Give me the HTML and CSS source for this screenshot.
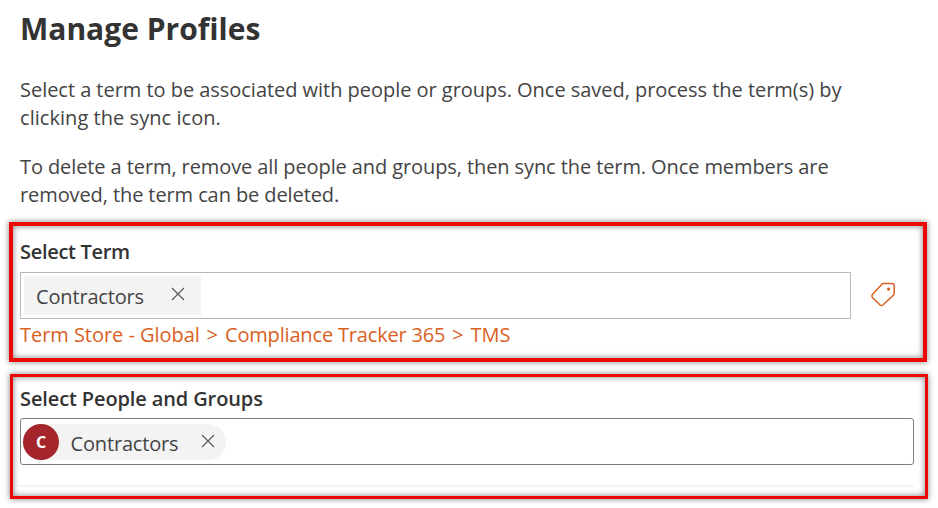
FILE: index.html
```html
<!DOCTYPE html>
<html lang="en">
<head>
    <meta charset="UTF-8">
    <meta name="viewport" content="width=device-width, initial-scale=1.0">
    <title>Manage Profiles</title>
    <link rel="stylesheet" href="styles.css">
</head>
<body>
    <h1>Manage Profiles</h1>
    <p class="intro">Select a term to be associated with people or groups. Once saved, process the term(s) by<br>
        <span class="intro-sync">clicking the sync icon.</span></p>
    <p class="intro intro-delete">To delete a term, remove all people and groups, then sync the term. Once members are<br>
        removed, the term can be deleted.</p>

    <section class="highlight term">
        <h2>Select Term</h2>
        <div class="term-row">
            <div class="field term-field">
                <div class="chip">
                    <span class="chip-text">Contractors</span>
                    <svg class="close" viewBox="0 0 14 14"><path d="M1 1 L13 13 M13 1 L1 13"/></svg>
                </div>
            </div>
            <svg class="tag" viewBox="0 0 26 27">
                <path d="M13.2 1.6 H22.2 Q24.2 1.6 24.2 3.6 V11.4 Q24.2 12.4 23.4 13.2 L12.9 23 Q11.5 24.2 10.1 23 L2.4 15.5 Q1.2 14 2.4 12.4 L11.7 2.4 Q12.4 1.6 13.2 1.6 Z"/>
                <circle cx="18.6" cy="7.1" r="1.6"/>
            </svg>
        </div>
        <div class="term-path">Term Store - Global <span class="sep">&gt;</span> <span class="term-set">Compliance Tracker 365</span> <span class="sep">&gt;</span> TMS</div>
    </section>

    <section class="highlight people">
        <h2>Select People and Groups</h2>
        <div class="field people-field">
            <div class="chip persona">
                <span class="avatar">C</span>
                <span class="chip-text">Contractors</span>
                <svg class="close" viewBox="0 0 14 14"><path d="M1 1 L13 13 M13 1 L1 13"/></svg>
            </div>
        </div>
        <hr>
    </section>
</body>
</html>
```
FILE: styles.css
```css
* {
    box-sizing: border-box;
}
body {
    margin: 0;
    height: 508px;
    overflow: hidden;
    background-color: #fff;
    color: #444;
    font-family: "Open Sans", "Noto Sans", sans-serif;
    font-size: 20px;
    line-height: 28px;
}
h1 {
    margin: 9px 0 0 20px;
    font-size: 30px;
    font-weight: 700;
    line-height: 40px;
    color: #333;
    white-space: nowrap;
}
.intro {
    margin: 27px 0 0 20px;
    letter-spacing: -0.035px;
    white-space: nowrap;
}
.intro-sync {
    letter-spacing: 0.05px;
}
.intro-delete {
    margin-top: 21px;
    letter-spacing: -0.095px;
}
.highlight {
    border: 4px solid #ec0606;
    box-shadow: 0 0 6px rgba(0, 0, 0, 0.5), inset 0 0 6px rgba(0, 0, 0, 0.5);
}
.term {
    width: 918px;
    height: 140px;
    margin: 13px 0 0 9px;
    padding: 12px 0 0 7px;
}
.people {
    width: 918px;
    height: 125px;
    margin: 12px 0 0 10px;
    padding: 8px 0 0 7px;
    border-width: 3px;
}
h2 {
    margin: 0;
    height: 34px;
    font-size: 20px;
    font-weight: 600;
    line-height: 28px;
    letter-spacing: -0.3px;
    color: #333;
}
.people h2 {
    height: 33px;
    letter-spacing: -0.12px;
}
.term-row {
    display: flex;
    align-items: center;
}
.field {
    height: 47px;
    border: 1px solid #b9b9b9;
}
.term-field {
    width: 831px;
    padding: 3px;
}
.chip {
    display: flex;
    align-items: center;
    justify-content: space-between;
    width: 177px;
    height: 39px;
    padding: 0 16px 0 12px;
    background-color: #f3f3f3;
}
.chip-text {
    padding-top: 2px;
    letter-spacing: -0.16px;
}
.close {
    width: 14px;
    height: 14px;
    margin-top: -3px;
    fill: none;
    stroke: #555;
    stroke-width: 1.1;
}
.tag {
    width: 26px;
    height: 27px;
    margin-left: 19px;
    fill: none;
    stroke: #d9601f;
    stroke-width: 1.5;
}
.tag circle {
    fill: #d9601f;
    stroke: none;
}
.term-path {
    margin-top: 2px;
    color: #d9601f;
    letter-spacing: -0.04px;
}
.sep {
    margin: 0 2px 0 1.5px;
}
.term-set {
    letter-spacing: -0.17px;
}
.people-field {
    width: 894px;
    padding: 5px 2px;
    border-color: #7d7d7d;
    border-radius: 3px;
}
.persona {
    width: 203px;
    height: 36px;
    padding: 0 11px 0 0;
    border-radius: 18px;
}
.persona .chip-text {
    margin-right: 11px;
    padding-top: 4px;
}
.avatar {
    width: 36px;
    height: 36px;
    border-radius: 50%;
    background-color: #a4262c;
    color: #fff;
    font-size: 16px;
    font-weight: 700;
    line-height: 36px;
    text-align: center;
}
hr {
    width: 894px;
    height: 2px;
    margin: 20px 0 0;
    border: 0;
    background-color: #f3f3f3;
}
```
